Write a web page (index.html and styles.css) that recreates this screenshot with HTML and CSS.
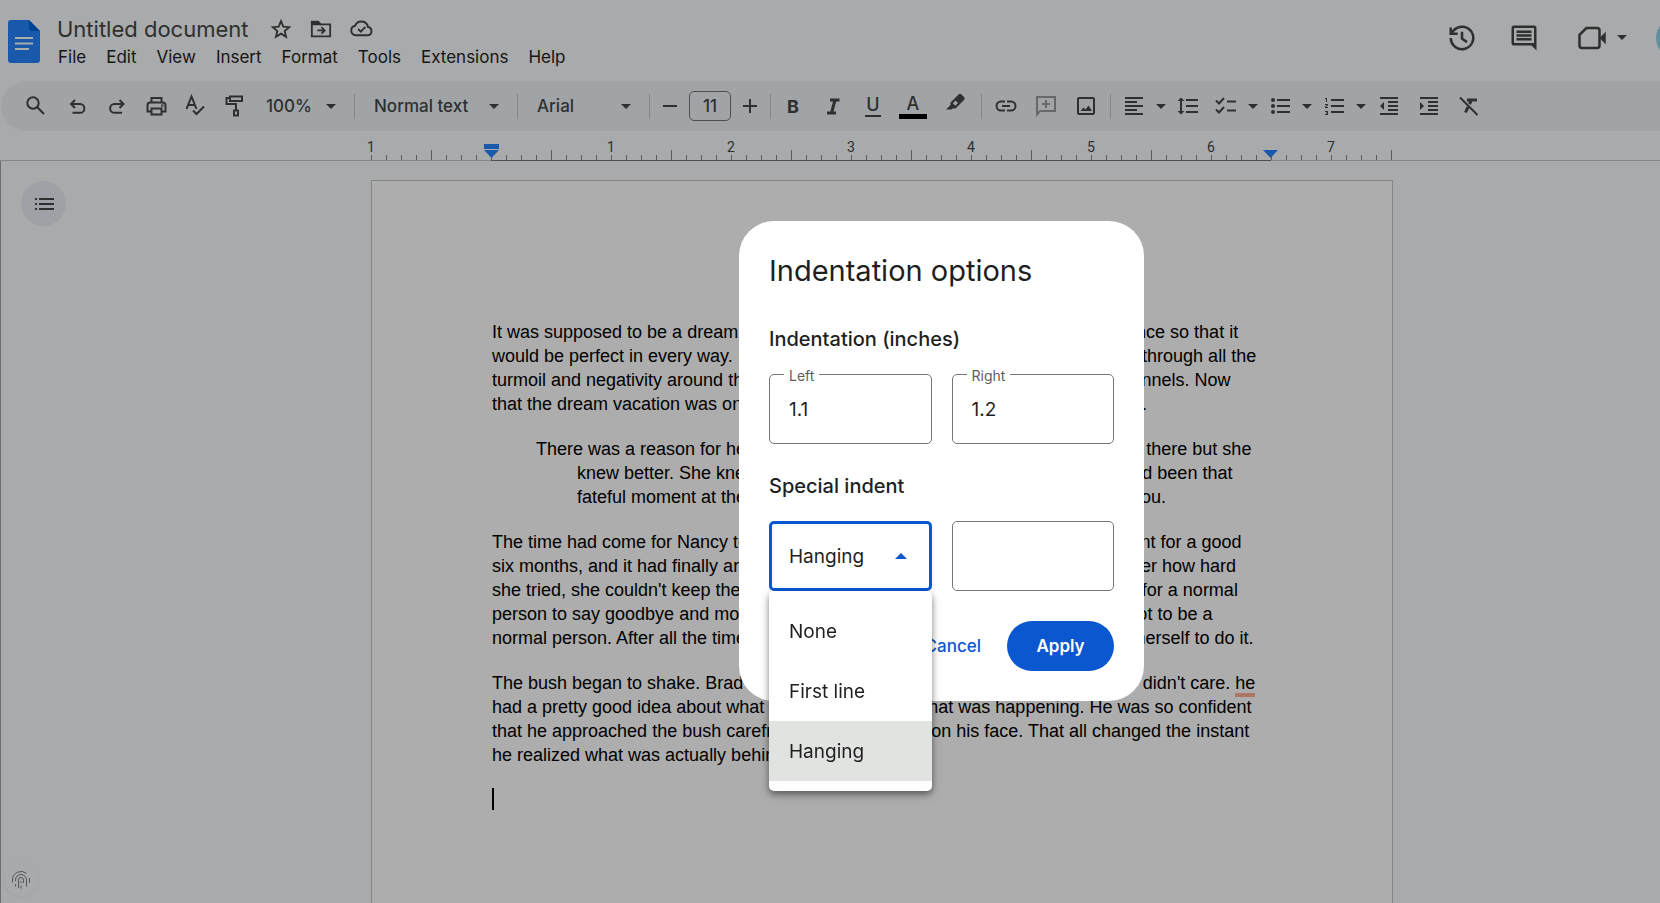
FILE: index.html
```html
<!DOCTYPE html>
<html lang="en">
<head>
  <meta charset="UTF-8" />
  <meta name="viewport" content="width=device-width, initial-scale=1.0"/>
  <title>Untitled document</title>
  <link rel="stylesheet" href="styles.css">
</head>
<body>

  <!-- Header -->
  <header class="header">
    <a href="#" class="logo" aria-label="Docs home">
      <svg width="32" height="43" viewBox="0 0 32 43">
        <path fill="#2684fc" d="M3 0h18l11 11v29a3 3 0 0 1-3 3H3a3 3 0 0 1-3-3V3a3 3 0 0 1 3-3z"/>
        <path fill="#0066da" d="M21 0l11 11H24a3 3 0 0 1-3-3z"/>
        <path stroke="#fff" stroke-width="2" d="M7 18h18M7 23.500h18M7 29h14"/>
      </svg>
    </a>
    <div class="title-block">
      <div class="title-row">
        <input type="text" class="doc-title" aria-label="Document title" value="Untitled document">
        <button class="icon-btn title-btn" aria-label="Star">
          <svg width="22" height="22" viewBox="0 0 24 24" class="line"><path d="M12 3.500l2.500 6 6.400.5-4.900 4.200 1.500 6.300L12 17.100l-5.500 3.400L8 14.200 3.100 10l6.400-.5z"/></svg>
        </button>
        <button class="icon-btn title-btn" aria-label="Move">
          <svg width="22" height="22" viewBox="0 0 24 24" class="line"><path d="M2 4.500h7l2.500 2.500H22v13H2z"/><path fill="currentColor" d="M2 4h7l2 3H2z"/><path d="M8 13.500h7.500M12.500 10l3.500 3.500-3.500 3.500"/></svg>
        </button>
        <button class="icon-btn title-btn" aria-label="Document status">
          <svg width="23" height="23" viewBox="0 0 24 24" class="line"><path d="M6 19a5 5 0 0 1-.6-9.900A7 7 0 0 1 18.800 10.500 4.300 4.300 0 0 1 18.700 19z"/><path d="M8.500 12.500l2.800 2.800 4.700-5"/></svg>
        </button>
      </div>
      <nav class="menu-bar">
        <button>File</button>
        <button>Edit</button>
        <button>View</button>
        <button>Insert</button>
        <button>Format</button>
        <button>Tools</button>
        <button>Extensions</button>
        <button>Help</button>
      </nav>
    </div>
    <div class="header-actions">
      <button class="icon-btn action-btn" aria-label="Version history">
        <svg width="30" height="30" viewBox="0 0 24 24" class="line"><path d="M3 12a9 9 0 1 0 2.600-6.400L3.500 8.200"/><path d="M3 3.500V8.500h5.500M12 7v5.500l4 2.800"/></svg>
      </button>
      <button class="icon-btn action-btn" aria-label="Comments">
        <svg width="30" height="30" viewBox="0 0 24 24"><path fill-rule="evenodd" d="M4 2h16a2 2 0 0 1 2 2v18l-4-4H4a2 2 0 0 1-2-2V4a2 2 0 0 1 2-2zm0 2v12h16V4z"/><path d="M6 6h12v2H6zm0 3h12v2H6zm0 3h12v2H6z"/></svg>
      </button>
      <button class="icon-btn meet-btn" aria-label="Join a call">
        <svg width="30" height="30" viewBox="0 0 24 24"><path class="line" d="M7.500 4h8.500a2 2 0 0 1 2 2v12a2 2 0 0 1-2 2H4a2 2 0 0 1-2-2V9.500z"/><path d="M18 12l5-5v10z"/></svg>
      </button>
      <button class="icon-btn caret-btn" aria-label="Call options">
        <svg width="10" height="5" viewBox="0 0 10 5"><path d="M0 0h10L5 5z"/></svg>
      </button>
      <button class="avatar" aria-label="Account"></button>
    </div>
  </header>

  <!-- Toolbar -->
  <div class="toolbar">
    <button class="icon-btn tool search" aria-label="Search the menus">
      <svg width="24" height="24" viewBox="0 0 24 24" class="line"><circle cx="9" cy="9" r="5.700"/><path d="M13.300 13.300l6.700 6.700"/></svg>
    </button>
    <button class="icon-btn tool" aria-label="Undo">
      <svg width="24" height="24" viewBox="0 0 24 24" class="line"><path d="M9 6L5 10l4 4M5.500 10h8.500a4.300 4.300 0 0 1 0 8.800H6.500"/></svg>
    </button>
    <button class="icon-btn tool" aria-label="Redo">
      <svg width="24" height="24" viewBox="0 0 24 24" class="line"><path d="M14.500 6l4 4-4 4M18 10H9.500a4.300 4.300 0 0 0 0 8.800H17"/></svg>
    </button>
    <button class="icon-btn tool" aria-label="Print">
      <svg width="24" height="24" viewBox="0 0 24 24" class="line"><path d="M7.500 8.500V4h10v4.500M7.500 17.500h-4V11A2.500 2.500 0 0 1 6 8.500h13a2.500 2.500 0 0 1 2.500 2.500v6.500h-4"/><path d="M7.500 14.500h10V20.500h-10z"/><circle cx="18.300" cy="11.700" r=".4"/></svg>
    </button>
    <button class="icon-btn tool" aria-label="Spelling and grammar check">
      <svg width="24" height="24" viewBox="0 0 24 24" class="line"><path d="M3.500 15L8.500 2.500 13.500 15M5.500 11h6M10 16.500l3.500 3.500 7.500-7.500"/></svg>
    </button>
    <button class="icon-btn tool" aria-label="Paint format">
      <svg width="24" height="24" viewBox="0 0 24 24" class="line"><path d="M8 2.500h12v4.500H8zM8 4H4.500v6H14v6M12 16.500h4v5h-4z"/></svg>
    </button>
    <span class="select-box zoom-box">
      <select aria-label="Zoom"><option>100%</option></select>
      <svg width="10" height="5" viewBox="0 0 10 5"><path d="M0 0h10L5 5z"/></svg>
    </span>
    <span class="sep"></span>
    <span class="select-box style-box">
      <select aria-label="Styles"><option>Normal text</option></select>
      <svg width="10" height="5" viewBox="0 0 10 5"><path d="M0 0h10L5 5z"/></svg>
    </span>
    <span class="sep"></span>
    <span class="select-box font-box">
      <select aria-label="Font"><option>Arial</option></select>
      <svg width="10" height="5" viewBox="0 0 10 5"><path d="M0 0h10L5 5z"/></svg>
    </span>
    <span class="sep"></span>
    <button class="icon-btn step" aria-label="Decrease font size">
      <svg width="14" height="14" viewBox="0 0 14 14" class="line"><path d="M0 7h14"/></svg>
    </button>
    <input type="text" class="font-size" aria-label="Font size" value="11">
    <button class="icon-btn step" aria-label="Increase font size">
      <svg width="14" height="14" viewBox="0 0 14 14" class="line"><path d="M0 7h14M7 0v14"/></svg>
    </button>
    <span class="sep"></span>
    <button class="icon-btn letter bold">B</button>
    <button class="icon-btn letter" aria-label="Italic">
      <svg width="24" height="24" viewBox="0 0 24 24" class="line thick"><path d="M9 6h9.500M6 19h9M14 6l-3.500 13"/></svg>
    </button>
    <button class="icon-btn letter underline"><span>U</span></button>
    <button class="icon-btn letter text-color"><span>A</span></button>
    <button class="icon-btn letter highlight" aria-label="Highlight color">
      <svg width="24" height="24" viewBox="0 0 24 24"><path fill-rule="evenodd" d="M16 0h2L21.500 3.500v2L12.500 14.500H9.500l-1 1H3L7.500 11V8.500zM9.800 9.200l2.500 2.500 2.700-2.700L12.500 6.500z"/></svg>
    </button>
    <span class="sep wide"></span>
    <button class="icon-btn letter" aria-label="Insert link">
      <svg width="24" height="24" viewBox="0 0 24 24" class="line"><path d="M11 7.500H7a4.500 4.500 0 0 0 0 9h4M13 7.500h4a4.500 4.500 0 0 1 0 9h-4M8 12h8"/></svg>
    </button>
    <button class="icon-btn letter muted" aria-label="Add comment" disabled>
      <svg width="24" height="24" viewBox="0 0 24 24" class="line"><path d="M3 20.500V3h18v14H6zM12 6v8M8 10h8"/></svg>
    </button>
    <button class="icon-btn letter" aria-label="Insert image">
      <svg width="24" height="24" viewBox="0 0 24 24"><rect class="line" x="4" y="4" width="16" height="16" rx="1"/><path d="M6.500 17l3-3.500 2 2 3-4 3.500 5.500z"/></svg>
    </button>
    <span class="sep wide"></span>
    <button class="icon-btn list-tool" aria-label="Align">
      <svg width="24" height="24" viewBox="0 0 24 24"><path d="M15 15H3v2h12v-2zm0-8H3v2h12V7zM3 13h18v-2H3v2zm0 8h18v-2H3v2zM3 3v2h18V3H3z"/></svg>
    </button>
    <button class="icon-btn caret-btn" aria-label="Align options">
      <svg width="10" height="5" viewBox="0 0 10 5"><path d="M0 0h10L5 5z"/></svg>
    </button>
    <button class="icon-btn list-tool" aria-label="Line spacing">
      <svg width="24" height="24" viewBox="0 0 24 24"><path d="M6 7h2.500L5 3.500 1.500 7H4v10H1.500L5 20.500 8.500 17H6V7zm4-2v2h12V5H10zm0 14h12v-2H10v2zm0-6h12v-2H10v2z"/></svg>
    </button>
    <button class="icon-btn list-tool" aria-label="Checklist">
      <svg width="24" height="24" viewBox="0 0 24 24" class="line"><path d="M2 6.500l3 3L10 4M2 15.500l3 3 5-5.500M13 7.500h9M13 16.500h9"/></svg>
    </button>
    <button class="icon-btn caret-btn" aria-label="Checklist options">
      <svg width="10" height="5" viewBox="0 0 10 5"><path d="M0 0h10L5 5z"/></svg>
    </button>
    <button class="icon-btn list-tool" aria-label="Bulleted list">
      <svg width="24" height="24" viewBox="0 0 24 24"><circle cx="5" cy="6" r="2"/><circle cx="5" cy="12" r="2"/><circle cx="5" cy="18" r="2"/><path d="M9 5h13v2H9zm0 6h13v2H9zm0 6h13v2H9z"/></svg>
    </button>
    <button class="icon-btn caret-btn" aria-label="Bulleted list options">
      <svg width="10" height="5" viewBox="0 0 10 5"><path d="M0 0h10L5 5z"/></svg>
    </button>
    <button class="icon-btn list-tool" aria-label="Numbered list">
      <svg width="24" height="24" viewBox="0 0 24 24"><path d="M3 18h2v.5H4v1h1v.5H3v1h3v-4H3v1zm1-10h1V4H3v1h1v3zm-1 3h1.800L3 13.100v.9h3v-1H4.200L6 10.900V10H3v1zm6-6v2h13V5H9zm0 14h13v-2H9v2zm0-6h13v-2H9v2z"/></svg>
    </button>
    <button class="icon-btn caret-btn" aria-label="Numbered list options">
      <svg width="10" height="5" viewBox="0 0 10 5"><path d="M0 0h10L5 5z"/></svg>
    </button>
    <button class="icon-btn letter" aria-label="Decrease indent">
      <svg width="24" height="24" viewBox="0 0 24 24"><path d="M11 17h10v-2H11v2zm-8-5l4 4V8l-4 4zm0 9h18v-2H3v2zM3 3v2h18V3H3zm8 6h10V7H11v2zm0 4h10v-2H11v2z"/></svg>
    </button>
    <button class="icon-btn letter" aria-label="Increase indent">
      <svg width="24" height="24" viewBox="0 0 24 24"><path d="M3 21h18v-2H3v2zM3 8v8l4-4-4-4zm8 9h10v-2H11v2zM3 3v2h18V3H3zm8 6h10V7H11v2zm0 4h10v-2H11v2z"/></svg>
    </button>
    <button class="icon-btn letter" aria-label="Clear formatting">
      <svg width="24" height="24" viewBox="0 0 24 24" class="line"><path d="M3 3.500L20.500 21"/><path class="thick" d="M10 6h10M14 7l-1.500 3M11 13L8.500 18.500"/></svg>
    </button>
  </div>

  <!-- Ruler -->
  <div class="ruler">
    <div class="ruler-scale">
      <div class="ruler-numbers">
        <span>1</span><span></span><span>1</span><span>2</span><span>3</span><span>4</span><span>5</span><span>6</span><span>7</span>
      </div>
      <svg class="marker left-marker" width="15" height="14" viewBox="0 0 15 14"><path d="M0 0h15v5H0zM0 6h15l-7.500 8z"/></svg>
      <svg class="marker right-marker" width="15" height="14" viewBox="0 0 15 14"><path d="M0 6h15l-7.500 8z"/></svg>
    </div>
  </div>

  <!-- Document -->
  <main class="workspace">
    <aside class="sidebar">
      <button class="icon-btn outline-btn" aria-label="Show document outline">
        <svg width="20" height="12" viewBox="0 0 20 12"><path d="M1 0h2v2H1zm0 5h2v2H1zm0 5h2v2H1zM5 0h15v2H5zm0 5h15v2H5zm0 5h15v2H5z"/></svg>
      </button>
      <button class="icon-btn print-btn" aria-label="Privacy">
        <svg width="20" height="20" viewBox="0 0 20 20" class="line thin"><path d="M1.500 12.500V10A8.500 8.500 0 0 1 15.500 3.500M18.500 8v5M4.500 11v-1a5.500 5.500 0 0 1 11 0v6.500M4.500 14v2.500M7.500 18v-8a2.500 2.500 0 0 1 5 0v3M10 11v2M10 15.500v3"/></svg>
      </button>
    </aside>
    <article class="page">
      <p>It was supposed to be a dream vacation. They had planned it over a year in advance so that it<br>
        would be perfect in every way. It had been what they had been looking forward to through all the<br>
        turmoil and negativity around them. It had been the light at the end of both their tunnels. Now<br>
        that the dream vacation was only a week away, the virus had stopped all air travel.</p>
      <p class="hanging">There was a reason for her shyness. Everyone assumed it had always been there but she<br>
        knew better. She knew the exact moment that the shyness began. It had been that<br>
        fateful moment at the lake. There are just some events that do that to you.</p>
      <p>The time had come for Nancy to say goodbye. She had been dreading this moment for a good<br>
        six months, and it had finally arrived despite her best efforts to forestall it. No matter how hard<br>
        she tried, she couldn't keep the inevitable from happening. So the time had come for a normal<br>
        person to say goodbye and move on. It was at this moment that Nancy decided not to be a<br>
        normal person. After all the time and effort she had expended, she couldn't bring herself to do it.</p>
      <p>The bush began to shake. Brad couldn't see what was causing it to shake, but he didn't care. <span class="grammar">he</span><br>
        had a pretty good idea about what was going on and what was happening. He was so confident<br>
        that he approached the bush carefree and with a smile on his face. That all changed the instant<br>
        he realized what was actually behind the bush.</p>
      <div class="cursor"></div>
    </article>
  </main>

  <!-- Indentation dialog -->
  <div class="scrim">
    <div class="dialog" role="dialog" aria-labelledby="dialogTitle">
      <h2 id="dialogTitle">Indentation options</h2>
      <h3>Indentation (inches)</h3>
      <div class="fields">
        <div class="field">
          <label for="leftIndent">Left</label>
          <input type="text" id="leftIndent" value="1.1">
        </div>
        <div class="field">
          <label for="rightIndent">Right</label>
          <input type="text" id="rightIndent" value="1.2">
        </div>
      </div>
      <h3>Special indent</h3>
      <div class="fields">
        <div class="field open">
          <select id="specialIndent" aria-label="Special indent">
            <option>None</option>
            <option>First line</option>
            <option selected>Hanging</option>
          </select>
          <svg width="12" height="6" viewBox="0 0 12 6"><path d="M0 6h12L6 0z"/></svg>
          <div class="options">
            <button>None</button>
            <button>First line</button>
            <button class="selected">Hanging</button>
          </div>
        </div>
        <div class="field">
          <input type="text" aria-label="Indent by" value="">
        </div>
      </div>
      <div class="dialog-actions">
        <button class="cancel-btn">Cancel</button>
        <button class="apply-btn">Apply</button>
      </div>
    </div>
  </div>

</body>
</html>
```
FILE: styles.css
```css
* {
  box-sizing: border-box;
}

html, body {
  height: 100%;
  margin: 0;
  overflow: hidden;
}

body {
  display: flex;
  flex-direction: column;
  font-family: Inter, Roboto, sans-serif;
  background: #f9fbfd;
  color: #444746;
}

button, input, select {
  font-family: inherit;
  color: inherit;
  background: none;
  border: none;
  padding: 0;
  margin: 0;
}

button {
  cursor: pointer;
}

select {
  appearance: none;
}

svg {
  display: block;
  flex: none;
  fill: currentColor;
}

.line {
  fill: none;
  stroke: currentColor;
  stroke-width: 2;
}

.thick {
  stroke-width: 3;
}

.thin {
  stroke-width: 1;
}

.icon-btn {
  display: flex;
  align-items: center;
  justify-content: center;
  flex: none;
}

/* Header */
.header {
  display: flex;
  flex: none;
  height: 81px;
  padding-left: 8px;
}

.logo {
  margin-top: 20px;
}

.title-block {
  margin: 12px 0 0 17px;
}

.title-row {
  display: flex;
  align-items: center;
  height: 33px;
}

.doc-title {
  width: 204px;
  font-size: 22px;
}

.title-btn {
  width: 40px;
}

.menu-bar {
  display: flex;
  gap: 20px;
  padding-left: 1px;
}

.menu-bar button {
  font-size: 17px;
  line-height: 24px;
  color: #1f1f1f;
}

.header-actions {
  display: flex;
  align-items: center;
  height: 75px;
  margin-left: auto;
}

.action-btn {
  width: 62px;
}

.meet-btn {
  width: 44px;
  margin-left: 15px;
}

.caret-btn {
  width: 16px;
}

.avatar {
  flex: none;
  width: 40px;
  height: 40px;
  margin: 0 -36px 0 26px;
  border-radius: 50%;
  background: #8fd3ea;
}

/* Toolbar */
.toolbar {
  display: flex;
  flex: none;
  align-items: center;
  height: 50px;
  margin-left: 1px;
  padding-left: 12px;
  border-radius: 25px 0 0 25px;
  background: #edf2f6;
}

.tool {
  width: 39px;
}

.search {
  width: 45px;
}

.letter {
  width: 40px;
  font-size: 18px;
}

.list-tool {
  width: 38px;
}

.highlight {
  width: 44px;
}

.step {
  width: 36px;
}

.bold {
  font-weight: 700;
}

.underline span {
  border-bottom: 2px solid;
  padding: 0 1px;
  line-height: 20px;
  font-weight: 500;
}

.text-color span {
  width: 28px;
  border-bottom: 5px solid #000;
  line-height: 20px;
  font-weight: 500;
}

.muted {
  opacity: 0.5;
}

.sep {
  flex: none;
  width: 1px;
  height: 25px;
  margin: 0 2px;
  background: #c7c7c7;
}

.sep.wide {
  margin: 0 4px;
}

.select-box {
  position: relative;
  flex: none;
}

.select-box select {
  width: 100%;
  padding-left: 17px;
  font-size: 17px;
  font-weight: 500;
}

.select-box svg {
  position: absolute;
  right: 16px;
  top: 50%;
  margin-top: -2px;
  pointer-events: none;
}

.zoom-box {
  width: 99px;
}

.zoom-box select {
  padding-left: 13px;
}

.style-box {
  width: 158px;
}

.font-box {
  width: 127px;
}

.font-size {
  width: 42px;
  height: 30px;
  margin: 0 1px;
  border: 1px solid #747775;
  border-radius: 5px;
  font-size: 17px;
  font-weight: 500;
  text-align: center;
}

/* Ruler */
.ruler {
  flex: none;
  height: 30px;
  padding-left: 371px;
  border-bottom: 1px solid #c4c7c5;
}

.ruler-scale {
  position: relative;
  width: 1021px;
  height: 29px;
  background:
    repeating-linear-gradient(to right, #80868b 0 1px, transparent 1px 15px) left bottom / 100% 5px no-repeat,
    repeating-linear-gradient(to right, #80868b 0 1px, transparent 1px 120px) 60px 100% / 100% 10px no-repeat;
}

.ruler-scale::after {
  content: "";
  position: absolute;
  left: 120px;
  right: 121px;
  top: 29px;
  height: 1px;
  background: #747775;
}

.ruler-numbers {
  display: flex;
  width: 1080px;
  margin-left: -60px;
}

.ruler-numbers span {
  width: 120px;
  padding-top: 7px;
  font-family: Roboto, sans-serif;
  font-size: 14px;
  line-height: 18px;
  text-align: center;
}

.marker {
  position: absolute;
  top: 13px;
  color: #2684fc;
}

.left-marker {
  left: 113px;
}

.right-marker {
  right: 114px;
}

/* Document */
.workspace {
  display: flex;
  flex: 1;
  min-height: 0;
  border-left: 1px solid #a0a3a5;
}

.sidebar {
  display: flex;
  flex-direction: column;
  justify-content: space-between;
  flex: none;
  width: 370px;
  padding: 20px 0 7px 20px;
}

.outline-btn {
  width: 45px;
  height: 45px;
  border-radius: 50%;
  background: #eceef6;
}

.print-btn {
  width: 32px;
  height: 32px;
  margin-left: -16px;
  border-radius: 50%;
  background: #f9fbfd;
  box-shadow: 0 1px 4px rgba(0, 0, 0, 0.06);
  color: #7d8280;
}

.page {
  flex: none;
  width: 1022px;
  margin-top: 19px;
  padding: 139px 118px 0 120px;
  border: 1px solid #c4c7c5;
  border-bottom: none;
  background: #fff;
  color: #000;
  font-family: "Liberation Sans", Arial, sans-serif;
  font-size: 18px;
  line-height: 24px;
  white-space: nowrap;
}

.page p {
  margin: 0 0 21px;
}

.page .hanging {
  padding-left: 85px;
  text-indent: -41px;
}

.grammar {
  border-bottom: 4px solid #ffb09a;
}

.cursor {
  width: 2px;
  height: 22px;
  background: #000;
}

/* Dialog */
.scrim {
  position: fixed;
  inset: 0;
  display: flex;
  align-items: center;
  justify-content: center;
  padding: 19px 0 0 223px;
  background: rgba(0, 0, 0, 0.32);
}

.dialog {
  width: 405px;
  padding: 30px;
  border-radius: 35px;
  background: #fff;
  color: #1f1f1f;
}

.dialog h2 {
  margin: 0 0 36px;
  font-size: 29px;
  font-weight: 400;
  line-height: 40px;
}

.dialog h3 {
  margin: 0 0 23px;
  font-size: 20px;
  font-weight: 500;
  line-height: 24px;
}

.fields {
  display: flex;
  gap: 20px;
  margin-bottom: 30px;
}

.field {
  position: relative;
  flex: 1;
}

.field label {
  position: absolute;
  top: -8px;
  left: 15px;
  padding: 0 5px;
  background: #fff;
  color: #5c5f5e;
  font-size: 14px;
  line-height: 20px;
}

.field input, .field select {
  display: block;
  width: 100%;
  height: 70px;
  padding: 0 19px;
  border: 1px solid #747775;
  border-radius: 5px;
  font-size: 19px;
}

.field.open select {
  padding: 0 17px;
  border: 3px solid #0b57d0;
}

.field svg {
  position: absolute;
  right: 25px;
  top: 32px;
  color: #0b57d0;
  pointer-events: none;
}

.options {
  position: absolute;
  top: 70px;
  left: 0;
  right: 0;
  padding: 10px 0;
  border-radius: 5px;
  background: #fff;
  box-shadow: 0 3px 6px rgba(0, 0, 0, 0.4), 0 4px 12px rgba(0, 0, 0, 0.15);
}

.options button {
  display: block;
  width: 100%;
  height: 60px;
  padding: 0 20px;
  font-size: 19px;
  text-align: left;
}

.options .selected {
  background: #e1e3e1;
}

.dialog-actions {
  display: flex;
  justify-content: flex-end;
  align-items: center;
  gap: 26px;
}

.cancel-btn {
  color: #0b57d0;
  font-size: 17px;
  font-weight: 500;
}

.apply-btn {
  width: 107px;
  height: 50px;
  border-radius: 25px;
  background: #0b57d0;
  color: #fff;
  font-size: 17px;
  font-weight: 600;
}
```
